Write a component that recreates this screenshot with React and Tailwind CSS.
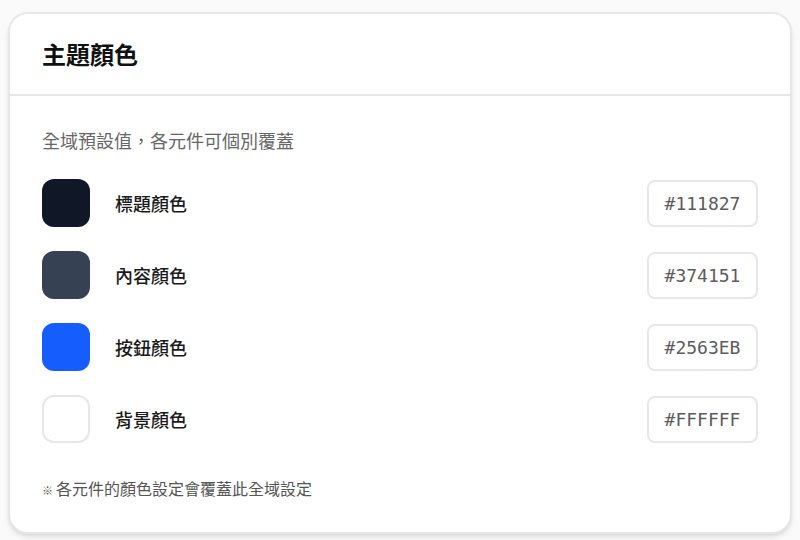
import React from 'react';

const FONT = { fontFamily: '"Noto Sans CJK TC", "Noto Sans", sans-serif' };

const colors = [
  { label: '標題顏色', hex: '#111827', swatch: 'bg-gray-900' },
  { label: '內容顏色', hex: '#374151', swatch: 'bg-gray-700' },
  { label: '按鈕顏色', hex: '#2563EB', swatch: 'bg-blue-600' },
  { label: '背景顏色', hex: '#FFFFFF', swatch: 'bg-white border-2 border-gray-200' },
];

const ColorRow = ({ label, hex, swatch }) => (
  <div className="flex items-center h-12">
    <div className={`w-12 h-12 rounded-xl ${swatch}`}></div>
    <span className="ml-[25px] text-[18px] font-medium text-[#1a1a1a]">{label}</span>
    <div
      className="ml-auto w-[111px] h-[47px] flex items-center justify-center rounded-lg border-2 border-gray-200 text-[18px] text-[#5c5c5c]"
      style={{ fontFamily: '"DejaVu Sans Mono", monospace' }}
    >
      {hex}
    </div>
  </div>
);

export default function App() {
  return (
    <div className="min-h-[540px] bg-[#fafafa] px-2 pt-[12px]" style={FONT}>
      <div className="bg-white border-2 border-gray-200 rounded-[20px] shadow-md overflow-hidden">
        <div className="px-8 py-6 border-b-2 border-gray-200">
          <h2 className="text-2xl leading-8 font-bold text-[#111]">主題顏色</h2>
        </div>
        <div className="px-8 pt-[30px] pb-[30px]">
          <p className="text-[18px] leading-7 text-[#666]">全域預設值，各元件可個別覆蓋</p>
          <div className="mt-[25px] flex flex-col gap-6">
            {colors.map(c => (
              <ColorRow key={c.label} {...c} />
            ))}
          </div>
          <p className="mt-[33px] text-base leading-6 text-[#555]">
            <span className="text-[11px] mr-[3px]">※</span>各元件的顏色設定會覆蓋此全域設定
          </p>
        </div>
      </div>
    </div>
  );
}
